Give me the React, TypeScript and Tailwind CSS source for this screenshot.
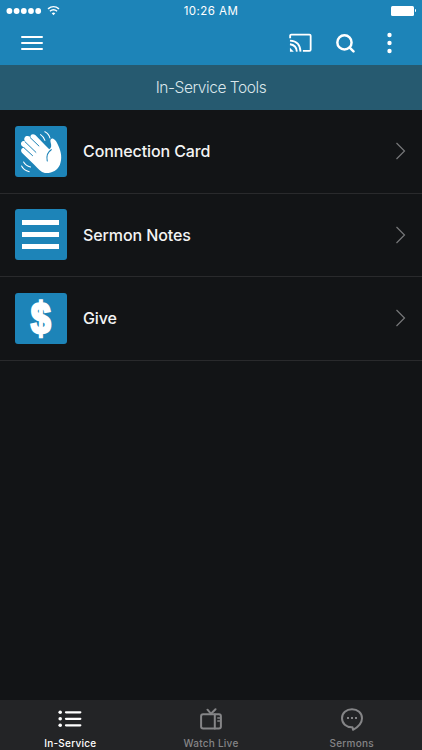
import type { ReactNode } from 'react';

interface Tool {
  label: string;
  icon: ReactNode;
}

const WaveIcon = () => (
  <svg viewBox="22 25 153 153" className="h-full w-full" fill="none" strokeLinecap="round" strokeLinejoin="round">
    <path
      d="M42 105C36 96 42 89 50 91L43 86C34 76 43 66 53 71L50 69C46 58 56 50 68 58C66 50 76 46 83 53L112 83C116 87 120 91 124 95C131 91 131 84 128 74C126 66 130 61 136 63C144 66 148 76 152 86C160 103 163 123 156 141C149 158 130 168 111 166C99 163 90 152 79 141Z"
      fill="white"
    />
    <path d="M67 60L93 85M51 72L84 104M49 91L74 114" stroke="#1d84b8" strokeWidth="3" />
    <path d="M130 96C119 103 115 115 118 130" stroke="#1d84b8" strokeWidth="3.4" />
    <path d="M98 51Q107 57 111 68M111 42Q123 48 126 61" stroke="white" strokeWidth="3.2" />
    <path d="M47 133Q53 144 68 148M41 145Q47 158 64 162" stroke="white" strokeWidth="3.2" />
  </svg>
);

const NotesIcon = () => (
  <div className="flex h-full w-full flex-col items-center justify-center gap-[7px]">
    <div className="h-[5px] w-[37px] bg-white" />
    <div className="h-[5px] w-[37px] bg-white" />
    <div className="h-[5px] w-[37px] bg-white" />
  </div>
);

const GiveIcon = () => (
  <svg viewBox="0 0 51 51" className="h-full w-full">
    <text
      transform="translate(25.5 40.6) scale(.8 1)"
      textAnchor="middle"
      fontSize="45"
      fontWeight="900"
      fill="white"
      stroke="white"
      strokeWidth="2.6"
      className="font-['Liberation_Sans',sans-serif]"
    >
      $
    </text>
  </svg>
);

const tools: Tool[] = [
  { label: 'Connection Card', icon: <WaveIcon /> },
  { label: 'Sermon Notes', icon: <NotesIcon /> },
  { label: 'Give', icon: <GiveIcon /> },
];

function StatusBar() {
  return (
    <div className="grid h-[22px] grid-cols-3 items-center pr-[6px] pl-[6px]">
      <div className="flex items-center">
        <svg width="56" height="14" viewBox="0 0 56 14" fill="none">
          <g fill="white">
            <circle cx="3.4" cy="7" r="2.9" />
            <circle cx="10.6" cy="7" r="2.9" />
            <circle cx="17.8" cy="7" r="2.9" />
            <circle cx="25" cy="7" r="2.9" />
            <circle cx="32.2" cy="7" r="2.9" />
            <path d="M47.5 11.2L45.7 9.2Q47.5 7.7 49.3 9.2Z" />
          </g>
          <path d="M42 4.9Q47.5 .4 53 4.9M43.9 7.2Q47.5 4.3 51.1 7.2" stroke="white" strokeWidth="1.4" />
        </svg>
      </div>
      <div className="pt-px text-center text-[11.5px] leading-none tracking-[.45px] whitespace-nowrap">10:26 AM</div>
      <div className="flex items-center justify-end gap-[.5px] pb-px">
        <div className="h-[10px] w-[23px] rounded-[1.5px] bg-white" />
        <div className="h-[3px] w-[1.5px] rounded-r bg-white" />
      </div>
    </div>
  );
}

function NavBar() {
  return (
    <div className="flex h-[42px] items-center justify-between pr-[30px] pl-[21px]">
      <button aria-label="Menu">
        <svg width="22" height="16" viewBox="0 0 22 16" stroke="white" strokeWidth="2" strokeLinecap="round">
          <path d="M1 2h20M1 8h20M1 14h20" />
        </svg>
      </button>
      <div className="flex items-center">
        <button aria-label="Cast" className="mr-[24px]">
          <svg width="23" height="20" viewBox="0 0 24 20" fill="none" stroke="white" strokeWidth="1.9">
            <path d="M1.2 5V2.5Q1.2 1.2 2.5 1.2H21.3Q22.6 1.2 22.6 2.5V17Q22.6 18.2 21.3 18.2H14.5" />
            <path d="M1 7.5Q11.7 8 12 19M1 11.3Q7.8 12 8.2 19" />
            <path d="M1 15L5 19H1Z" fill="white" stroke="none" />
          </svg>
        </button>
        <button aria-label="Search" className="mr-[32px]">
          <svg width="19" height="19" viewBox="0 0 20 20" fill="none" stroke="white" strokeWidth="2.6" strokeLinecap="round">
            <circle cx="8.9" cy="8.9" r="7.5" />
            <path d="M14.4 14.4L18.4 18.4" />
          </svg>
        </button>
        <button aria-label="More">
          <svg width="5" height="22" viewBox="0 0 5 22" fill="white">
            <circle cx="2.5" cy="3" r="2.2" />
            <circle cx="2.5" cy="11" r="2.2" />
            <circle cx="2.5" cy="19" r="2.2" />
          </svg>
        </button>
      </div>
    </div>
  );
}

function ToolRow({ label, icon }: Tool) {
  return (
    <div className="flex h-[83.5px] items-center border-b border-[#292a2c] pr-[16px] pl-[15px]">
      <div className="h-[51px] w-[51.5px] overflow-hidden rounded-[3px] bg-[#1d84b8]">{icon}</div>
      <span className="ml-[16.5px] flex-1 text-[16px] font-medium tracking-[-.1px] text-[#f4f4f4]">{label}</span>
      <svg width="11" height="18" viewBox="0 0 11 18" fill="none" stroke="#77787a" strokeWidth="1.2">
        <path d="M1.5 1L9.5 9L1.5 17" />
      </svg>
    </div>
  );
}

function TabBar() {
  return (
    <nav className="grid h-[50px] grid-cols-3 bg-[#232426] text-[10px] leading-none font-medium tracking-[.25px] text-[#858587]">
      <div className="flex flex-col items-center pt-[8px] text-white">
        <svg width="24" height="22" viewBox="0 0 24 22" fill="white">
          <circle cx="2.2" cy="4.3" r="1.8" />
          <circle cx="2.2" cy="10.8" r="1.8" />
          <circle cx="2.2" cy="17.3" r="1.8" />
          <path d="M8 4.3h14.3M8 10.8h14.3M8 17.3h14.3" stroke="white" strokeWidth="2.3" strokeLinecap="round" />
        </svg>
        <span className="mt-[8px]">In-Service</span>
      </div>
      <div className="flex flex-col items-center pt-[8px]">
        <svg width="24" height="22" viewBox="0 0 24 22" fill="none" stroke="currentColor" strokeWidth="2" strokeLinecap="round">
          <rect x="2.1" y="6.2" width="19.8" height="14.4" rx="2" />
          <path d="M15.8 6.5V20.5M8.5 1.7L12 5.8L16.5 1.2" />
          <path d="M18.8 10h1.8M18.8 13h1.8" strokeWidth="1.5" />
        </svg>
        <span className="mt-[8px]">Watch Live</span>
      </div>
      <div className="flex flex-col items-center pt-[8px]">
        <svg width="24" height="23" viewBox="0 0 24 23" fill="none" stroke="currentColor" strokeWidth="2">
          <path d="M12.5 19.2C6 19.5 2 15.4 2 10.2S6.3 1.2 12 1.2S22 5 22 10.2C22 15 18.5 18.8 13 21.8Z" strokeLinejoin="round" />
          <path d="M7 10h2M11 10h2M15 10h2" strokeWidth="2" />
        </svg>
        <span className="mt-[7px]">Sermons</span>
      </div>
    </nav>
  );
}

export default function App() {
  return (
    <div className="flex h-[750px] w-[422px] flex-col overflow-hidden bg-[#121416] font-['Inter',sans-serif] text-white">
      <header className="h-[65px] bg-[#1d84b8]">
        <StatusBar />
        <NavBar />
      </header>
      <div className="flex h-[45px] items-center justify-center bg-[#265a70] text-[15.5px] font-light tracking-[-.45px] text-[#dbe6eb]">
        In-Service Tools
      </div>
      <main className="flex-1 pt-[.2px]">
        {tools.map((tool) => (
          <ToolRow key={tool.label} {...tool} />
        ))}
      </main>
      <TabBar />
    </div>
  );
}
